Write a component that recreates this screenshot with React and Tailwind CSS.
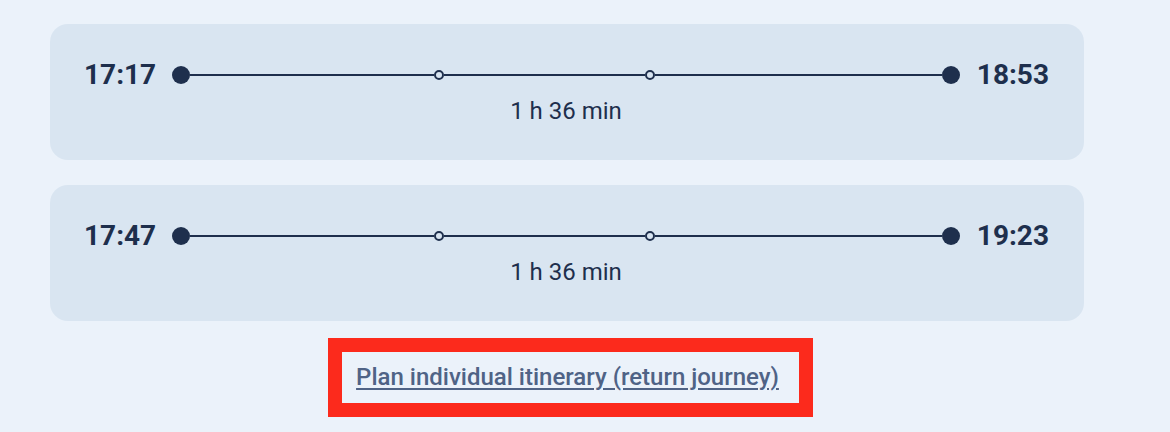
const journeys = [
  { dep: '17:17', arr: '18:53', duration: '1 h 36 min' },
  { dep: '17:47', arr: '19:23', duration: '1 h 36 min' },
]

function JourneyCard({ dep, arr, duration }) {
  return (
    <div className="flex items-start rounded-[18px] bg-[#d9e5f1] pl-[34px] pr-[35px] pt-[35px] h-[136px]">
      <span className="text-[28px] leading-[32px] font-bold text-[#1e2f4d]">{dep}</span>
      <div className="flex-1 flex flex-col ml-[16px] mr-[17px]">
        <div className="flex items-center h-[32px]">
          <span className="w-[18px] h-[18px] rounded-full bg-[#1e2f4d] shrink-0" />
          <span className="flex-[245] h-[2px] bg-[#1e2f4d]" />
          <span className="w-[10px] h-[10px] rounded-full border-2 border-[#1e2f4d] bg-[#d9e5f1] shrink-0" />
          <span className="flex-[202] h-[2px] bg-[#1e2f4d]" />
          <span className="w-[10px] h-[10px] rounded-full border-2 border-[#1e2f4d] bg-[#d9e5f1] shrink-0" />
          <span className="flex-[289] h-[2px] bg-[#1e2f4d]" />
          <span className="w-[18px] h-[18px] rounded-full bg-[#1e2f4d] shrink-0" />
        </div>
        <span className="mt-[6px] text-center text-[24px] leading-[28px] text-[#1e2f4d]">{duration}</span>
      </div>
      <span className="text-[28px] leading-[32px] font-bold text-[#1e2f4d]">{arr}</span>
    </div>
  )
}

export default function App() {
  return (
    <div className="w-[1170px] h-[432px] bg-[#ebf2fa] pt-[24px] font-['Roboto',sans-serif]">
      <div className="w-[1034px] ml-[50px] flex flex-col gap-[25px]">
        {journeys.map((j) => (
          <JourneyCard key={j.dep} {...j} />
        ))}
      </div>
      <div className="w-[1034px] ml-[50px] flex justify-center mt-[17px]">
        <div className="ml-[7px] border-[14px] border-[#fc2a1c] bg-[#ebf2fa] pl-[14px] pr-[20px] py-[11px]">
          <a href="#" className="text-[24px] leading-[28px] font-medium text-[#4f6386] underline underline-offset-[3px]">
            Plan individual itinerary (return journey)
          </a>
        </div>
      </div>
    </div>
  )
}
